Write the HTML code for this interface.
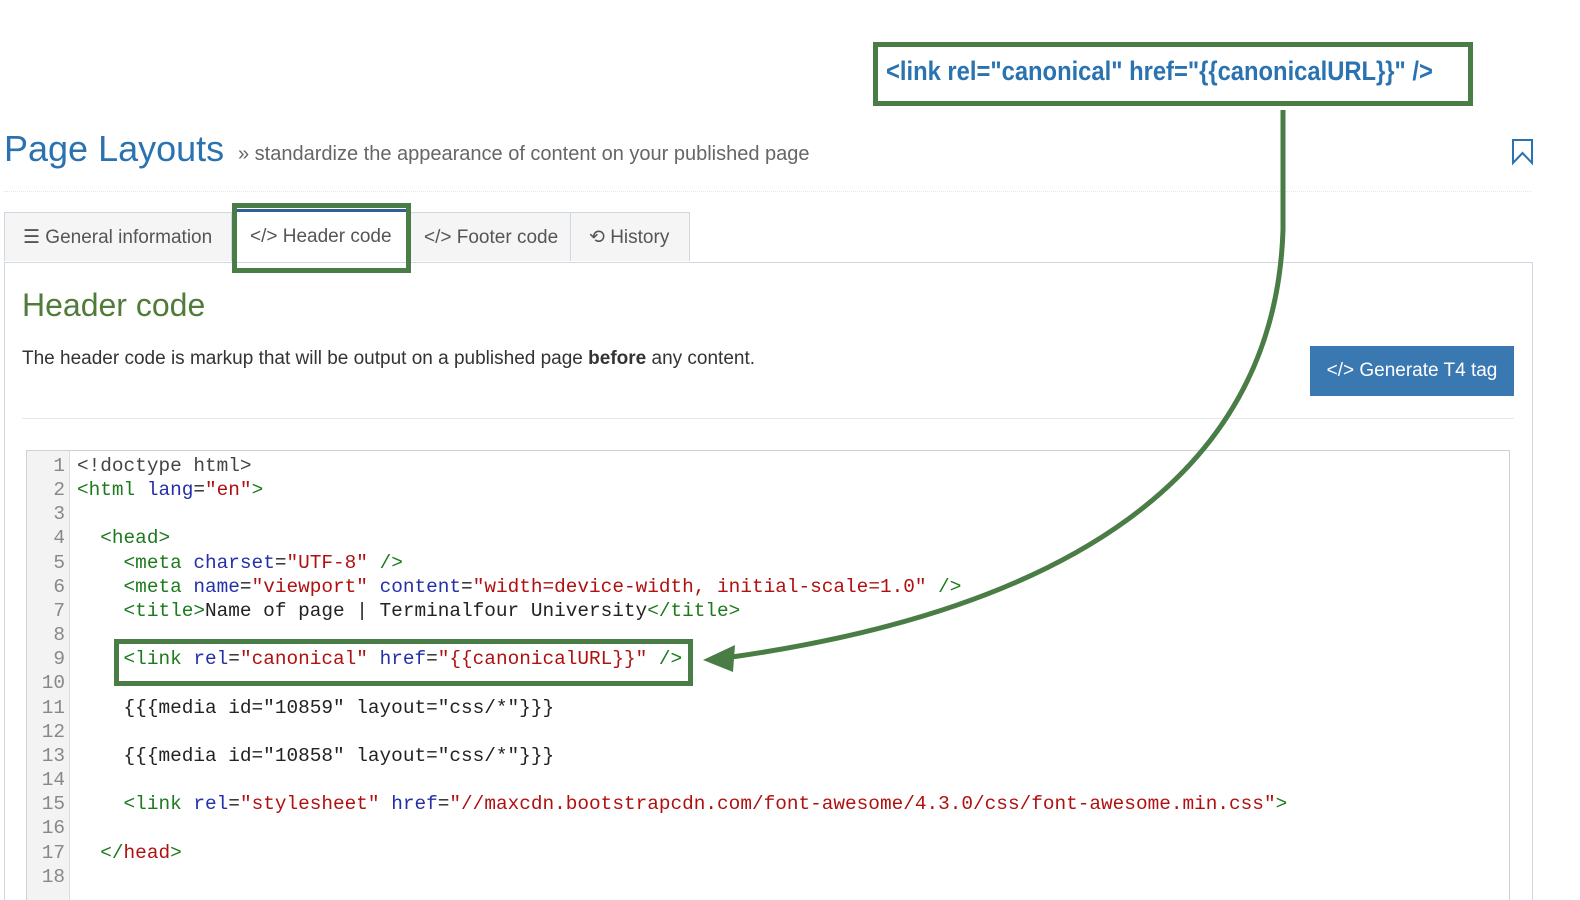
<!DOCTYPE html>
<html style="overflow:hidden;height:900px"><head><meta charset="utf-8"><style>
body{margin:0;width:1580px;height:900px;background:#fff;font-family:"Liberation Sans",sans-serif;position:relative;overflow:hidden}
.abs{position:absolute}
.tab{position:absolute;top:212px;height:49px;background:#f5f5f5;border:1px solid #cfd8e2;border-bottom:none;color:#555;font-size:19px;line-height:49px;box-sizing:border-box;padding-left:18px}
.code{position:absolute;left:26px;top:450px;width:1484px;height:450px;border:1px solid #d0d0d0;border-bottom:none;box-sizing:border-box;font-family:"Liberation Mono",monospace;font-size:19.4px;overflow:hidden}
.gut{position:absolute;left:0;top:0;width:42px;height:100%;background:#f3f3f3;border-right:1px solid #ddd}
.ln{position:absolute;left:0;width:38px;text-align:right;color:#888}
.cl{position:absolute;left:50px;white-space:pre;color:#222}
.t{color:#1d7a1d}.a{color:#2430a8}.s{color:#b01010}
</style></head><body>
<div class="abs" style="left:4px;top:128px;font-size:36px;color:#2a73b0">Page Layouts</div>
<div class="abs" style="left:238px;top:143px;font-size:20px;color:#666">» standardize the appearance of content on your published page</div>
<svg class="abs" style="left:1511px;top:138px" width="24" height="28"><path d="M2 2H21V25L11.5 15L2 25Z" fill="none" stroke="#2a73b0" stroke-width="2"/></svg>
<div class="abs" style="left:4px;top:191px;width:1528px;border-top:1px dotted #e6e6e6"></div>
<div class="abs" style="left:4px;top:262px;width:1527px;height:640px;border:1px solid #cfd8e2"></div>
<div class="tab" style="left:4px;width:228px">☰ General information</div>
<div class="tab" style="left:235px;width:175px;background:#fff;border-top:3px solid #2f5f95;height:52px;top:209px;padding-left:14px">&lt;/&gt; Header code</div>
<div class="tab" style="left:410px;width:161px;padding-left:13px">&lt;/&gt; Footer code</div>
<div class="tab" style="left:570px;width:120px">⟲ History</div>
<div class="abs" style="left:232px;top:203px;width:179px;height:70px;border:5px solid #4a7c45;box-sizing:border-box"></div>
<div class="abs" style="left:22px;top:287px;font-size:32px;color:#4f7c3a">Header code</div>
<div class="abs" style="left:22px;top:348px;font-size:19px;color:#333">The header code is markup that will be output on a published page <b>before</b> any content.</div>
<div class="abs" style="left:1310px;top:346px;width:204px;height:50px;background:#3a78b2;color:#fff;font-size:19px;line-height:50px;text-align:center">&lt;/&gt; Generate T4 tag</div>
<div class="abs" style="left:22px;top:418px;width:1492px;border-top:1px solid #e8e8e8"></div>
<div class="code"><div class="gut"></div>
<div class="ln" style="top:4px">1</div><div class="ln" style="top:28px">2</div><div class="ln" style="top:52px">3</div><div class="ln" style="top:76px">4</div><div class="ln" style="top:101px">5</div><div class="ln" style="top:125px">6</div><div class="ln" style="top:149px">7</div><div class="ln" style="top:173px">8</div><div class="ln" style="top:197px">9</div><div class="ln" style="top:221px">10</div><div class="ln" style="top:246px">11</div><div class="ln" style="top:270px">12</div><div class="ln" style="top:294px">13</div><div class="ln" style="top:318px">14</div><div class="ln" style="top:342px">15</div><div class="ln" style="top:366px">16</div><div class="ln" style="top:391px">17</div><div class="ln" style="top:415px">18</div>
<div class="cl" style="top:4px;color:#444">&lt;!doctype html&gt;</div>
<div class="cl" style="top:28px"><span class="t">&lt;html</span> <span class="a">lang</span>=<span class="s">"en"</span><span class="t">&gt;</span></div>
<div class="cl" style="top:76px"><span class="t">  &lt;head&gt;</span></div>
<div class="cl" style="top:101px"><span class="t">    &lt;meta</span> <span class="a">charset</span>=<span class="s">"UTF-8"</span> <span class="t">/&gt;</span></div>
<div class="cl" style="top:125px"><span class="t">    &lt;meta</span> <span class="a">name</span>=<span class="s">"viewport"</span> <span class="a">content</span>=<span class="s">"width=device-width, initial-scale=1.0"</span> <span class="t">/&gt;</span></div>
<div class="cl" style="top:149px"><span class="t">    &lt;title&gt;</span>Name of page | Terminalfour University<span class="t">&lt;/title&gt;</span></div>
<div class="cl" style="top:197px"><span class="t">    &lt;link</span> <span class="a">rel</span>=<span class="s">"canonical"</span> <span class="a">href</span>=<span class="s">"{{canonicalURL}}"</span> <span class="t">/&gt;</span></div>
<div class="cl" style="top:246px">    {{{media id="10859" layout="css/*"}}}</div>
<div class="cl" style="top:294px">    {{{media id="10858" layout="css/*"}}}</div>
<div class="cl" style="top:342px"><span class="t">    &lt;link</span> <span class="a">rel</span>=<span class="s">"stylesheet"</span> <span class="a">href</span>=<span class="s">"//maxcdn.bootstrapcdn.com/font-awesome/4.3.0/css/font-awesome.min.css"</span><span class="t">&gt;</span></div>
<div class="cl" style="top:391px"><span class="t">  &lt;/</span><span class="s">head</span><span class="t">&gt;</span></div>
</div>
<div class="abs" style="left:114px;top:639px;width:579px;height:47px;border:5px solid #4a7c45;box-sizing:border-box"></div>
<div class="abs" style="left:873px;top:42px;width:600px;height:64px;border:5px solid #4a7c45;box-sizing:border-box;background:#fff"></div>
<div class="abs" style="left:886px;top:56px;font-size:27px;font-weight:bold;color:#2a73b0;white-space:nowrap;transform:scaleX(0.88);transform-origin:left">&lt;link rel="canonical" href="{{canonicalURL}}" /&gt;</div>
<svg class="abs" style="left:0;top:0" width="1580" height="900"><path d="M1283 110 L1283 230 C1275 480 1060 610 732 657" fill="none" stroke="#4a7c45" stroke-width="5"/><path d="M703 660 L735 645 L733 672 Z" fill="#4a7c45"/></svg>
</body></html>
